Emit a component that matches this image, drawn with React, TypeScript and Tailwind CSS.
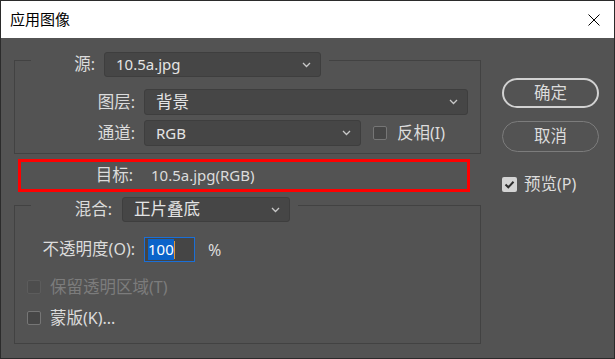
import React from "react";

// Chinese glyphs sit a touch larger than the Latin ones in the original dialog
function Zh({ children }: { children: React.ReactNode }) {
  return <span className="text-[16.5px]">{children}</span>;
}

function Chevron() {
  return (
    <svg width="9" height="6" viewBox="0 0 9 6" className="shrink-0">
      <path d="M1 1l3.5 3.5L8 1" stroke="#c8c8c8" strokeWidth="1.3" fill="none" />
    </svg>
  );
}

function Select({ children, className }: { children: React.ReactNode; className: string }) {
  return (
    <div
      className={`flex items-center justify-between rounded-[3px] border border-[#3e3e3e] bg-[#464646] pl-[11px] pr-[9px] text-[15px] text-[#e4e4e4] ${className}`}
    >
      <span>{children}</span>
      <Chevron />
    </div>
  );
}

function Box({ checked, dim }: { checked?: boolean; dim?: boolean }) {
  if (checked) {
    return (
      <div className="w-[15px] h-[15px] rounded-[2px] bg-[#d4d4d4] flex items-center justify-center">
        <svg width="11" height="9" viewBox="0 0 11 9">
          <path d="M1.5 4.5l2.8 2.8L9.5 1.8" stroke="#2e2e2e" strokeWidth="2" fill="none" />
        </svg>
      </div>
    );
  }
  return (
    <div
      className={`w-[14px] h-[14px] rounded-[2px] border ${
        dim ? "border-[#5c5c5c] bg-[#4d4d4d]" : "border-[#767676] bg-[#474747]"
      }`}
    />
  );
}

export default function App() {
  return (
    <div className="w-[615px] h-[359px] bg-[#535353] border border-[#2b2b2b] flex flex-col text-[16px] text-[#dcdcdc] font-['Noto_Sans','Noto_Sans_CJK_SC',sans-serif] leading-none">
      {/* Title bar */}
      <div className="h-[37px] bg-white flex items-center justify-between pl-[9px] pr-[14px]">
        <span className="text-black text-[15px]">应用图像</span>
        <svg width="12" height="12" viewBox="0 0 12 12">
          <path d="M0.5 0.5l11 11M11.5 0.5l-11 11" stroke="#000" strokeWidth="1" />
        </svg>
      </div>

      <div className="flex flex-1 pl-[13px] pt-[14px]">
        {/* Left column */}
        <div className="w-[467px] flex flex-col">
          {/* Source group */}
          <div>
            <div className="flex items-start h-[25px]">
              <div className="w-[17px] mt-[8px] border-t border-[#424242]" />
              <div className="flex items-center pr-[8px]">
                <span className="w-[73px] pr-[9px] text-right">
                  <Zh>源</Zh>:
                </span>
                <Select className="w-[217px] h-[25px]">10.5a.jpg</Select>
              </div>
              <div className="flex-1 mt-[8px] border-t border-[#424242]" />
            </div>
            <div className="-mt-[17px] pt-[29px] pb-[7px] border-x border-b border-[#424242] flex flex-col gap-[5px]">
              <div className="flex items-center">
                <span className="w-[129px] pr-[9px] text-right">
                  <Zh>图层</Zh>:
                </span>
                <Select className="w-[324px] h-[26px]">
                  <Zh>背景</Zh>
                </Select>
              </div>
              <div className="flex items-center">
                <span className="w-[129px] pr-[9px] text-right">
                  <Zh>通道</Zh>:
                </span>
                <Select className="w-[217px] h-[26px]">RGB</Select>
                <div className="ml-[12px] flex items-center gap-[10px]">
                  <Box />
                  <span>
                    <Zh>反相</Zh>(I)
                  </span>
                </div>
              </div>
            </div>
          </div>

          {/* Target */}
          <div className="mt-[5px] ml-[4px] w-[452px] h-[33px] border-[3px] border-[#ff0000] flex items-center">
            <span className="w-[112px] text-right">
              <Zh>目标</Zh>:
            </span>
            <span className="ml-[18px] text-[15px]">10.5a.jpg(RGB)</span>
          </div>

          {/* Blending group */}
          <div className="mt-[5px]">
            <div className="flex items-start h-[25px]">
              <div className="w-[17px] mt-[8px] border-t border-[#424242]" />
              <div className="flex items-center pr-[8px]">
                <span className="w-[91px] pr-[10px] text-right">
                  <Zh>混合</Zh>:
                </span>
                <Select className="w-[168px] h-[25px] pl-[9px]">
                  <Zh>正片叠底</Zh>
                </Select>
              </div>
              <div className="flex-1 mt-[8px] border-t border-[#424242]" />
            </div>
            <div className="-mt-[17px] pt-[32px] pb-[15px] border-x border-b border-[#424242] flex flex-col">
              <div className="flex items-center h-[25px]">
                <span className="w-[129px] pr-[9px] text-right">
                  <Zh>不透明度</Zh>(O):
                </span>
                <div className="w-[51px] h-[25px] border border-[#1a6fd8] bg-[#454545] pl-[3px] flex items-center text-[15px]">
                  <span className="bg-[#0b63c9] text-white py-[3px]">100</span>
                  <div className="w-px h-[18px] bg-[#e8962e]" />
                </div>
                <span className="ml-[13px]">%</span>
              </div>
              <div className="mt-[15px] h-[20px] flex items-center pl-[12px] gap-[9px]">
                <Box dim />
                <span className="text-[#7c7c7c]">
                  <Zh>保留透明区域</Zh>(T)
                </span>
              </div>
              <div className="mt-[11px] h-[20px] flex items-center pl-[12px] gap-[9px]">
                <Box />
                <span>
                  <Zh>蒙版</Zh>(K)...
                </span>
              </div>
            </div>
          </div>
        </div>

        {/* Right column */}
        <div className="ml-[21px] pt-[26px] w-[97px] flex flex-col">
          <div className="h-[30px] rounded-full border-2 border-[#d2d2d2] flex items-center justify-center">
            <Zh>确定</Zh>
          </div>
          <div className="mt-[13px] h-[31px] rounded-full border border-[#7c7c7c] flex items-center justify-center">
            <Zh>取消</Zh>
          </div>
          <div className="mt-[22px] h-[20px] flex items-center gap-[7px]">
            <Box checked />
            <span>
              <Zh>预览</Zh>(P)
            </span>
          </div>
        </div>
      </div>
    </div>
  );
}
